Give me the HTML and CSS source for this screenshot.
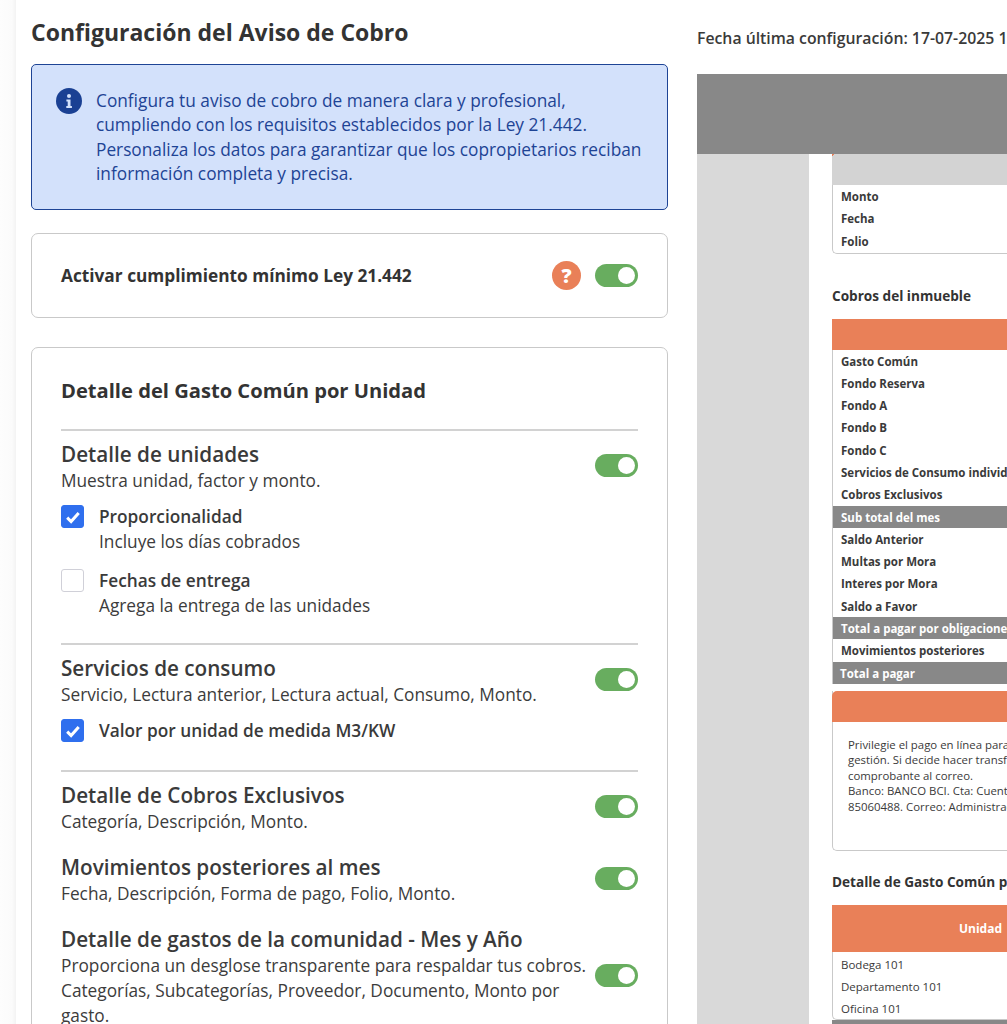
FILE: index.html
```html
<!DOCTYPE html>
<html lang="es">
<head>
<meta charset="utf-8">
<title>Configuración del Aviso de Cobro</title>
<link rel="stylesheet" href="styles.css">
</head>
<body>
<div class="page">
  <div class="rail"></div>
  <main class="config">
    <h1 class="title">Configuración del Aviso de Cobro</h1>
    <div class="notice">
      <svg class="notice-icon" viewBox="0 0 26 26" width="26" height="26"><circle cx="13" cy="13" r="13" fill="#1a4093"/><circle cx="13" cy="8" r="2" fill="#d3e1fb"/><path d="M10.4 11.4h4.1v6.6h1.4v2h-5.6v-2h1.4v-4.6h-1.3z" fill="#d3e1fb"/></svg>
      <p class="notice-text">Configura tu aviso de cobro de manera clara y profesional, cumpliendo con los requisitos establecidos por la Ley 21.442. Personaliza los datos para garantizar que los copropietarios reciban información completa y precisa.</p>
    </div>
    <section class="card law">
      <span class="law-label">Activar cumplimiento mínimo Ley 21.442</span>
      <span class="help">?</span>
      <span class="switch"></span>
    </section>
    <section class="card detail">
      <h2 class="detail-title">Detalle del Gasto Común por Unidad</h2>
      <div class="group first">
        <div class="row">
          <div class="row-text"><h3>Detalle de unidades</h3><p>Muestra unidad, factor y monto.</p></div>
          <span class="switch"></span>
        </div>
        <div class="check check-a">
          <span class="box on"><svg viewBox="0 0 24 24" width="24" height="24"><path d="M6.2 12.6l3.9 3.9 7.6-8.6" fill="none" stroke="#fff" stroke-width="3"/></svg></span>
          <div><strong>Proporcionalidad</strong><span class="sub">Incluye los días cobrados</span></div>
        </div>
        <div class="check check-b">
          <span class="box"></span>
          <div><strong>Fechas de entrega</strong><span class="sub">Agrega la entrega de las unidades</span></div>
        </div>
      </div>
      <div class="group">
        <div class="row">
          <div class="row-text"><h3>Servicios de consumo</h3><p>Servicio, Lectura anterior, Lectura actual, Consumo, Monto.</p></div>
          <span class="switch"></span>
        </div>
        <div class="check check-a">
          <span class="box on"><svg viewBox="0 0 24 24" width="24" height="24"><path d="M6.2 12.6l3.9 3.9 7.6-8.6" fill="none" stroke="#fff" stroke-width="3"/></svg></span>
          <div><strong>Valor por unidad de medida M3/KW</strong></div>
        </div>
      </div>
      <div class="group tight">
        <div class="row">
          <div class="row-text"><h3>Detalle de Cobros Exclusivos</h3><p>Categoría, Descripción, Monto.</p></div>
          <span class="switch"></span>
        </div>
        <div class="row">
          <div class="row-text"><h3>Movimientos posteriores al mes</h3><p>Fecha, Descripción, Forma de pago, Folio, Monto.</p></div>
          <span class="switch"></span>
        </div>
        <div class="row">
          <div class="row-text"><h3>Detalle de gastos de la comunidad - Mes y Año</h3><p>Proporciona un desglose transparente para respaldar tus cobros. Categorías, Subcategorías, Proveedor, Documento, Monto por gasto.</p></div>
          <span class="switch"></span>
        </div>
      </div>
    </section>
  </main>
  <aside class="preview">
    <p class="stamp">Fecha última configuración: 17-07-2025 15:30</p>
    <div class="viewer">
      <div class="viewer-bar"></div>
      <div class="viewer-body">
        <div class="sheet">
          <div class="table pay">
            <div class="band-grey"></div>
            <div class="line b">Monto</div>
            <div class="line b">Fecha</div>
            <div class="line b">Folio</div>
          </div>
          <h4 class="sheet-title first-title">Cobros del inmueble</h4>
          <div class="table charges">
            <div class="band-orange"></div>
            <div class="line b">Gasto Común</div>
            <div class="line b">Fondo Reserva</div>
            <div class="line b">Fondo A</div>
            <div class="line b">Fondo B</div>
            <div class="line b">Fondo C</div>
            <div class="line b">Servicios de Consumo individuales</div>
            <div class="line b">Cobros Exclusivos</div>
            <div class="line b total">Sub total del mes</div>
            <div class="line b">Saldo Anterior</div>
            <div class="line b">Multas por Mora</div>
            <div class="line b">Interes por Mora</div>
            <div class="line b">Saldo a Favor</div>
            <div class="line b total">Total a pagar por obligaciones</div>
            <div class="line b">Movimientos posteriores</div>
            <div class="line b total last">Total a pagar</div>
          </div>
          <div class="table pay-note">
            <div class="band-orange"></div>
            <div class="note">
              <p>Privilegie el pago en línea para facilitar su</p>
              <p>gestión. Si decide hacer transferencia envíe el</p>
              <p>comprobante al correo.</p>
              <p>Banco: BANCO BCI. Cta: Cuenta Corriente N°</p>
              <p>85060488. Correo: Administración</p>
            </div>
          </div>
          <h4 class="sheet-title second-title">Detalle de Gasto Común por Unidad</h4>
          <div class="table units">
            <div class="band-orange unit-band"><span>Unidad</span></div>
            <div class="line">Bodega 101</div>
            <div class="line">Departamento 101</div>
            <div class="line">Oficina 101</div>
          </div>
          <div class="after-units"></div>
        </div>
      </div>
    </div>
  </aside>
</div>
</body>
</html>
```
FILE: styles.css
```css
* { box-sizing: border-box; }
html, body { margin: 0; height: 100%; overflow: hidden; background: #fff; }
body { font-family: "Open Sans", sans-serif; color: #333; }
h1, h2, h3, h4, p { margin: 0; }
.page { display: flex; height: 1024px; overflow: hidden; }
.rail { width: 16px; flex: none; background: linear-gradient(to right, #fdfdfd 0, #fbfbfb 75%, #f3f3f3 100%); }
.config { width: 637px; flex: none; margin-left: 15px; padding-top: 17px; }
.title { font-size: 23px; font-weight: 700; line-height: 30px; color: #333; }
.notice { display: flex; gap: 14px; height: 146px; margin-top: 17px; padding: 23px 24px; background: #d3e1fb; border: 1px solid #1e4495; border-radius: 5px; }
.notice-icon { flex: none; }
.notice-text { font-size: 17.27px; line-height: 24.4px; color: #1e4495; width: 552px; margin-top: 1px; }
.card { background: #fff; border: 1px solid #c9c9c9; border-radius: 7px; }
.law { display: flex; align-items: center; height: 85px; margin-top: 23px; padding: 0 29px; }
.law-label { font-size: 17.27px; font-weight: 700; flex: 1; }
.help { width: 29px; height: 29px; border-radius: 50%; background: #e98058; color: #fff; font-weight: 800; font-size: 20px; line-height: 29px; text-align: center; margin-right: 14px; }
.switch { position: relative; flex: none; display: block; width: 43px; height: 23px; border-radius: 12px; background: #68ad5f; }
.switch::after { content: ""; position: absolute; right: 3px; top: 3px; width: 17px; height: 17px; border-radius: 50%; background: #fff; }
.detail { margin-top: 29px; height: 760px; padding: 27px 29px 0 29px; }
.detail-title { font-size: 20.15px; font-weight: 700; line-height: 30px; }
.group { border-top: 2px solid #d2d2d2; padding-top: 10px; margin-top: 25px; }
.group.first { margin-top: 24px; }
.group.tight { margin-top: 27px; }
.row { display: flex; align-items: center; justify-content: space-between; }
.row .switch { margin-bottom: 3px; }
.row-text { width: 530px; }
.row-text h3 { font-size: 20.7px; font-weight: 600; line-height: 27px; color: #3a3a3a; }
.row-text p { font-size: 17.27px; line-height: 25px; color: #3c3c3c; }
.check { display: flex; gap: 15px; }
.check strong { display: block; font-size: 17.27px; font-weight: 600; line-height: 25px; color: #3a3a3a; }
.sub { display: block; font-size: 17.27px; line-height: 25px; color: #3c3c3c; }
.check-a { margin-top: 11px; }
.check-b { margin-top: 14px; }
.box { flex: none; width: 23px; height: 23px; margin-top: 1px; border: 1px solid #d0d0d8; border-radius: 3px; background: #fff; display: block; }
.box.on { background: #2f6fee; border-color: #2f6fee; }
.box svg { display: block; margin: -1px; }
.tight .row + .row { margin-top: 20px; }
.preview { flex: 1; min-width: 0; margin-left: 29px; overflow: hidden; }
.stamp { font-size: 15.8px; font-weight: 600; line-height: 22px; white-space: nowrap; margin-top: 27px; color: #3a3a3a; }
.viewer { margin-top: 25px; }
.viewer-bar { height: 80px; background: #888; }
.viewer-body { display: flex; height: 880px; background: #d9d9d9; padding-left: 112px; }
.sheet { flex: 1; min-width: 0; background: #fff; padding-left: 23px; font-size: 11.5px; }
.table { border: 1px solid #c9c9c9; border-right: 0; border-top: 0; border-radius: 0 0 0 5px; }
.band-grey { height: 31px; margin-left: -1px; background: linear-gradient(135deg, #e98058 2px, #d3d3d3 2px); }
.band-orange { height: 31px; background: #e98058; margin-left: -1px; }
.line { height: 22.29px; line-height: 23.3px; padding-left: 8px; white-space: nowrap; color: #3a3a3a; }
.line.b { font-weight: 700; }
.pay .line:last-child { height: 23px; }
.sheet-title { font-size: 13.6px; font-weight: 700; line-height: 16px; white-space: nowrap; color: #333; }
.first-title { margin-top: 34px; }
.charges { margin-top: 15px; border: 0; border-left: 1px solid #c9c9c9; border-radius: 0; }
.total { background: #888; }
.line.total { color: #fff; }
.last { padding-left: 7px; }
.pay-note { margin-top: 7px; height: 160px; }
.pay-note .band-orange { border-radius: 5px 0 0 0; }
.note { padding: 15px 0 0 15px; font-size: 11.4px; line-height: 15.5px; color: #3a3a3a; white-space: nowrap; }
.second-title { margin-top: 23px; }
.units { margin-top: 15px; height: 115px; }
.unit-band { height: 47px; margin-bottom: 1px; display: flex; align-items: center; padding-left: 127px; color: #fff; font-weight: 700; font-size: 12px; }
.after-units { height: 10px; background: #888; }
```
